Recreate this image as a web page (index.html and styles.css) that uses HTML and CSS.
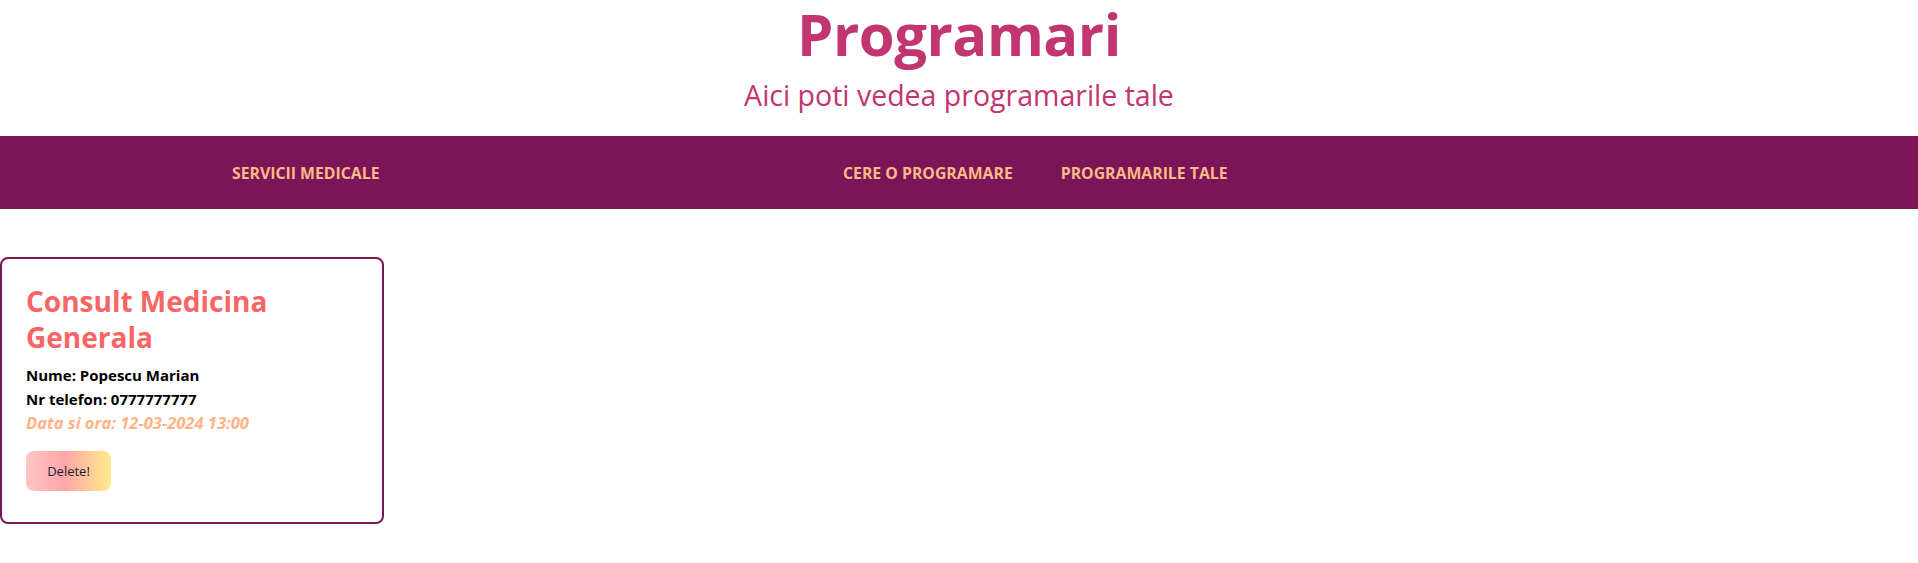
FILE: index.html
```html
<!DOCTYPE html>
<html lang="ro">
<head>
<meta charset="utf-8">
<title>Programari</title>
<link rel="stylesheet" href="styles.css">
</head>
<body>
<header class="hero">
  <h1 class="hero-title">Programari</h1>
  <p class="hero-sub">Aici poti vedea programarile tale</p>
</header>
<nav class="nav">
  <a class="nav-link nav-brand" href="#">SERVICII MEDICALE</a>
  <div class="nav-group">
    <a class="nav-link" href="#">CERE O PROGRAMARE</a>
    <a class="nav-link" href="#">PROGRAMARILE TALE</a>
  </div>
</nav>
<main class="list">
  <article class="card">
    <h2 class="card-title">Consult Medicina Generala</h2>
    <p class="card-line">Nume: Popescu Marian</p>
    <p class="card-line">Nr telefon: 0777777777</p>
    <p class="card-line card-date">Data si ora: 12-03-2024 13:00</p>
    <button class="btn-delete" type="button">Delete!</button>
  </article>
</main>
</body>
</html>
```
FILE: styles.css
```css
* { box-sizing: border-box; }
body {
  margin: 0;
  font-family: "Open Sans", "Noto Sans", sans-serif;
  background: #ffffff;
}
.hero {
  text-align: center;
  color: #c13571;
  height: 136px;
}
.hero-title {
  margin: 0;
  font-size: 58px;
  font-weight: 700;
  line-height: 68px;
  letter-spacing: -0.5px;
}
.hero-sub {
  margin: 7px 0 0;
  font-size: 28.5px;
  font-weight: 400;
  line-height: 40px;
}
.nav {
  height: 73px;
  background: #7a1657;
  display: flex;
  align-items: center;
  padding-left: 232px;
}
.nav-link {
  color: #ffb886;
  text-decoration: none;
  font-weight: 700;
  font-size: 15.8px;
}
.nav-brand {
  width: 611px;
}
.nav-group {
  display: flex;
  gap: 48px;
}
.list {
  padding-top: 48px;
}
.card {
  width: 384px;
  height: 267px;
  border: 2px solid #7a1657;
  border-radius: 8px;
  padding: 24px 24px;
}
.card-title {
  margin: 0 0 8px;
  color: #f76666;
  font-size: 28px;
  line-height: 36px;
  font-weight: 700;
}
.card-line {
  margin: 0;
  font-size: 15px;
  line-height: 24px;
  font-weight: 700;
  color: #000;
}
.card-date {
  color: #ffb385;
  font-style: italic;
  font-size: 16.5px;
}
.btn-delete {
  margin-top: 16px;
  width: 85px;
  height: 40px;
  border: none;
  border-radius: 8px;
  background: linear-gradient(90deg, #ffc6c8 0%, #ffa7a7 45%, #ffeb8b 100%);
  color: #1b1b3a;
  font-family: "Open Sans", "Noto Sans", sans-serif;
  font-size: 13px;
}
```
